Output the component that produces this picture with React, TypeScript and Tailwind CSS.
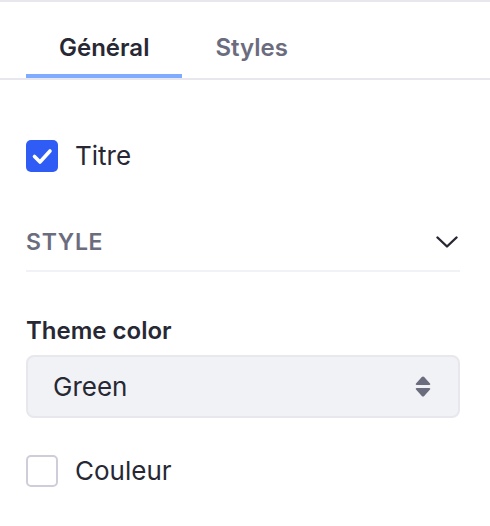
import { useState } from "react";

const font = { fontFamily: "Inter, 'Noto Sans', sans-serif" };

function Checkbox({ checked, label, onToggle }: { checked: boolean; label: string; onToggle: () => void }) {
  return (
    <label className="flex items-center gap-[17px] cursor-pointer" onClick={onToggle}>
      {checked ? (
        <span className="flex h-8 w-8 shrink-0 items-center justify-center rounded-[5px] bg-[#2e5cf4]">
          <svg viewBox="0 0 32 32" className="h-8 w-8" fill="none">
            <path d="M8.5 16.5l5.5 5.5 10-11" stroke="#fff" strokeWidth="3.6" strokeLinecap="round" strokeLinejoin="round" />
          </svg>
        </span>
      ) : (
        <span className="h-8 w-8 shrink-0 rounded-[5px] border-2 border-[#cdced9] bg-white" />
      )}
      <span className="text-[26px] leading-8 text-[#272833]">{label}</span>
    </label>
  );
}

export default function App() {
  const [tab, setTab] = useState("general");
  const [titre, setTitre] = useState(true);
  const [couleur, setCouleur] = useState(false);

  return (
    <div className="min-h-[526px] w-full border-t-2 border-[#e7e7ed] bg-white" style={font}>
      {/* tabs */}
      <nav className="flex border-b-2 border-[#e7e7ed] px-[26px]">
        {[
          { id: "general", label: "Général" },
          { id: "styles", label: "Styles" },
        ].map((t) => (
          <button
            key={t.id}
            onClick={() => setTab(t.id)}
            className={
              "border-b-4 px-[33px] pt-[30px] pb-[10px] text-[24px] font-semibold leading-8 " +
              (tab === t.id ? "border-[#80acff] text-[#272833]" : "border-transparent text-[#6b6c7e]")
            }
          >
            {t.label}
          </button>
        ))}
      </nav>

      <div className="pl-[26px] pr-[30px]">
        <div className="mt-[60px]">
          <Checkbox checked={titre} label="Titre" onToggle={() => setTitre(!titre)} />
        </div>

        {/* collapsible section header */}
        <div className="mt-[54px] flex items-center justify-between border-b-2 border-[#f1f2f5] pb-3">
          <span className="text-[23px] font-semibold uppercase leading-8 tracking-[0.03em] text-[#6b6c7e]">Style</span>
          <svg viewBox="0 0 22 12" className="mr-[2px] h-3 w-[22px]" fill="none">
            <path d="M1.5 1.5l9.5 9 9.5-9" stroke="#272833" strokeWidth="2.4" strokeLinecap="round" strokeLinejoin="round" />
          </svg>
        </div>

        <div className="mt-[43px]">
          <div className="text-[24px] font-semibold leading-8 text-[#272833]">Theme color</div>
          <div className="mt-2 flex h-[63px] items-center justify-between rounded-lg border-2 border-[#e7e7ed] bg-[#f1f2f5] pl-[25px] pr-[27px]">
            <span className="text-[26px] leading-8 text-[#272833]">Green</span>
            <svg viewBox="0 0 16 21" className="h-[21px] w-4" fill="#6b6c7e">
              <path d="M8 0.5c0.5 0 0.9 0.2 1.2 0.6l5.8 6.4c0.6 0.7 0.2 1.5-0.7 1.5H1.7c-0.9 0-1.3-0.8-0.7-1.5L6.8 1.1C7.1 0.7 7.5 0.5 8 0.5z" />
              <path d="M8 20.5c0.5 0 0.9-0.2 1.2-0.6l5.8-6.4c0.6-0.7 0.2-1.5-0.7-1.5H1.7c-0.9 0-1.3 0.8-0.7 1.5l5.8 6.4c0.3 0.4 0.7 0.6 1.2 0.6z" />
            </svg>
          </div>
        </div>

        <div className="mt-[37px]">
          <Checkbox checked={couleur} label="Couleur" onToggle={() => setCouleur(!couleur)} />
        </div>
      </div>
    </div>
  );
}
